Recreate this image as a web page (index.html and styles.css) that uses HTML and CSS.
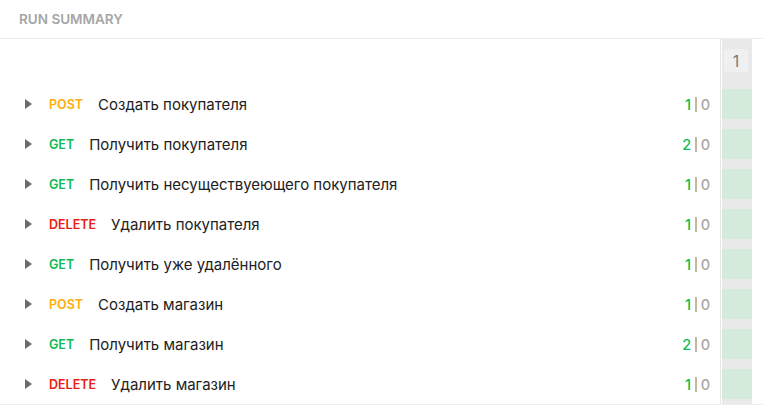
FILE: index.html
```html
<!DOCTYPE html>
<html>
<head>
<meta charset="utf-8">
<link rel="stylesheet" href="styles.css">
</head>
<body>
<div class="header"><span class="title">RUN SUMMARY</span></div>
<div class="main">
  <div class="list">
    <div class="row"><span class="caret"></span><span class="method post">POST</span><span class="name">Создать покупателя</span><span class="count"><span class="pass">1</span><span class="sep"></span><span class="fail">0</span></span></div>
    <div class="row"><span class="caret"></span><span class="method get">GET</span><span class="name">Получить покупателя</span><span class="count"><span class="pass">2</span><span class="sep"></span><span class="fail">0</span></span></div>
    <div class="row"><span class="caret"></span><span class="method get">GET</span><span class="name">Получить несуществуеющего покупателя</span><span class="count"><span class="pass">1</span><span class="sep"></span><span class="fail">0</span></span></div>
    <div class="row"><span class="caret"></span><span class="method delete">DELETE</span><span class="name">Удалить покупателя</span><span class="count"><span class="pass">1</span><span class="sep"></span><span class="fail">0</span></span></div>
    <div class="row"><span class="caret"></span><span class="method get">GET</span><span class="name">Получить уже удалённого</span><span class="count"><span class="pass">1</span><span class="sep"></span><span class="fail">0</span></span></div>
    <div class="row"><span class="caret"></span><span class="method post">POST</span><span class="name">Создать магазин</span><span class="count"><span class="pass">1</span><span class="sep"></span><span class="fail">0</span></span></div>
    <div class="row"><span class="caret"></span><span class="method get">GET</span><span class="name">Получить магазин</span><span class="count"><span class="pass">2</span><span class="sep"></span><span class="fail">0</span></span></div>
    <div class="row"><span class="caret"></span><span class="method delete">DELETE</span><span class="name">Удалить магазин</span><span class="count"><span class="pass">1</span><span class="sep"></span><span class="fail">0</span></span></div>
  </div>
  <div class="iter">
    <div class="iter-head"><span class="iter-num">1</span></div>
    <div class="cell"></div>
    <div class="cell"></div>
    <div class="cell"></div>
    <div class="cell"></div>
    <div class="cell"></div>
    <div class="cell"></div>
    <div class="cell"></div>
    <div class="cell"></div>
  </div>
</div>
</body>
</html>
```

FILE: styles.css
```css
html, body {
  margin: 0;
  padding: 0;
  background: #ffffff;
  font-family: Inter, "Noto Sans", sans-serif;
}
.header {
  height: 38px;
  border-bottom: 1px solid #ededed;
  display: flex;
  align-items: center;
  padding-left: 19px;
}
.title {
  font-size: 13.5px;
  font-weight: 600;
  color: #a6a6a6;
}
.main {
  display: flex;
  border-bottom: 1px solid #ededed;
}
.list {
  border-right: 1px solid #e6e6e6;
  padding-top: 45px;
  box-sizing: border-box;
  width: 721px;
}
.row {
  height: 40px;
  display: flex;
  align-items: center;
  padding-left: 25px;
  padding-right: 10px;
}
.caret {
  width: 0;
  height: 0;
  border-top: 5px solid transparent;
  border-bottom: 5px solid transparent;
  border-left: 7px solid #6b6b6b;
  margin-right: 17px;
}
.method {
  font-size: 12.5px;
  font-weight: 600;
  margin-right: 15px;
}
.post { color: #ffad0a; }
.get { color: #0cbb52; }
.delete { color: #eb2013; }
.name {
  font-size: 15px;
  color: #212121;
  flex: 1;
}
.count {
  display: flex;
  align-items: center;
  font-size: 14.5px;
  font-weight: 500;
}
.pass { color: #0cbb52; }
.fail { color: #a6a6a6; }
.sep {
  width: 1.5px;
  height: 15px;
  background: #c4b6a6;
  margin: 0 4px;
}
.iter {
  width: 30px;
  margin-left: 1px;
  background: #e9e9e9;
  display: flex;
  flex-direction: column;
}
.iter-head {
  height: 45px;
  padding-top: 10px;
  box-sizing: border-box;
  padding-left: 2px;
}
.iter-num {
  display: flex;
  align-items: center;
  justify-content: center;
  width: 24px;
  height: 23px;
  border-radius: 3px;
  background: #f0f0f0;
  color: #7a7a7a;
  font-size: 16px;
}
.cell {
  height: 30px;
  margin: 5px 0;
  background: #d4eadb;
}
```
